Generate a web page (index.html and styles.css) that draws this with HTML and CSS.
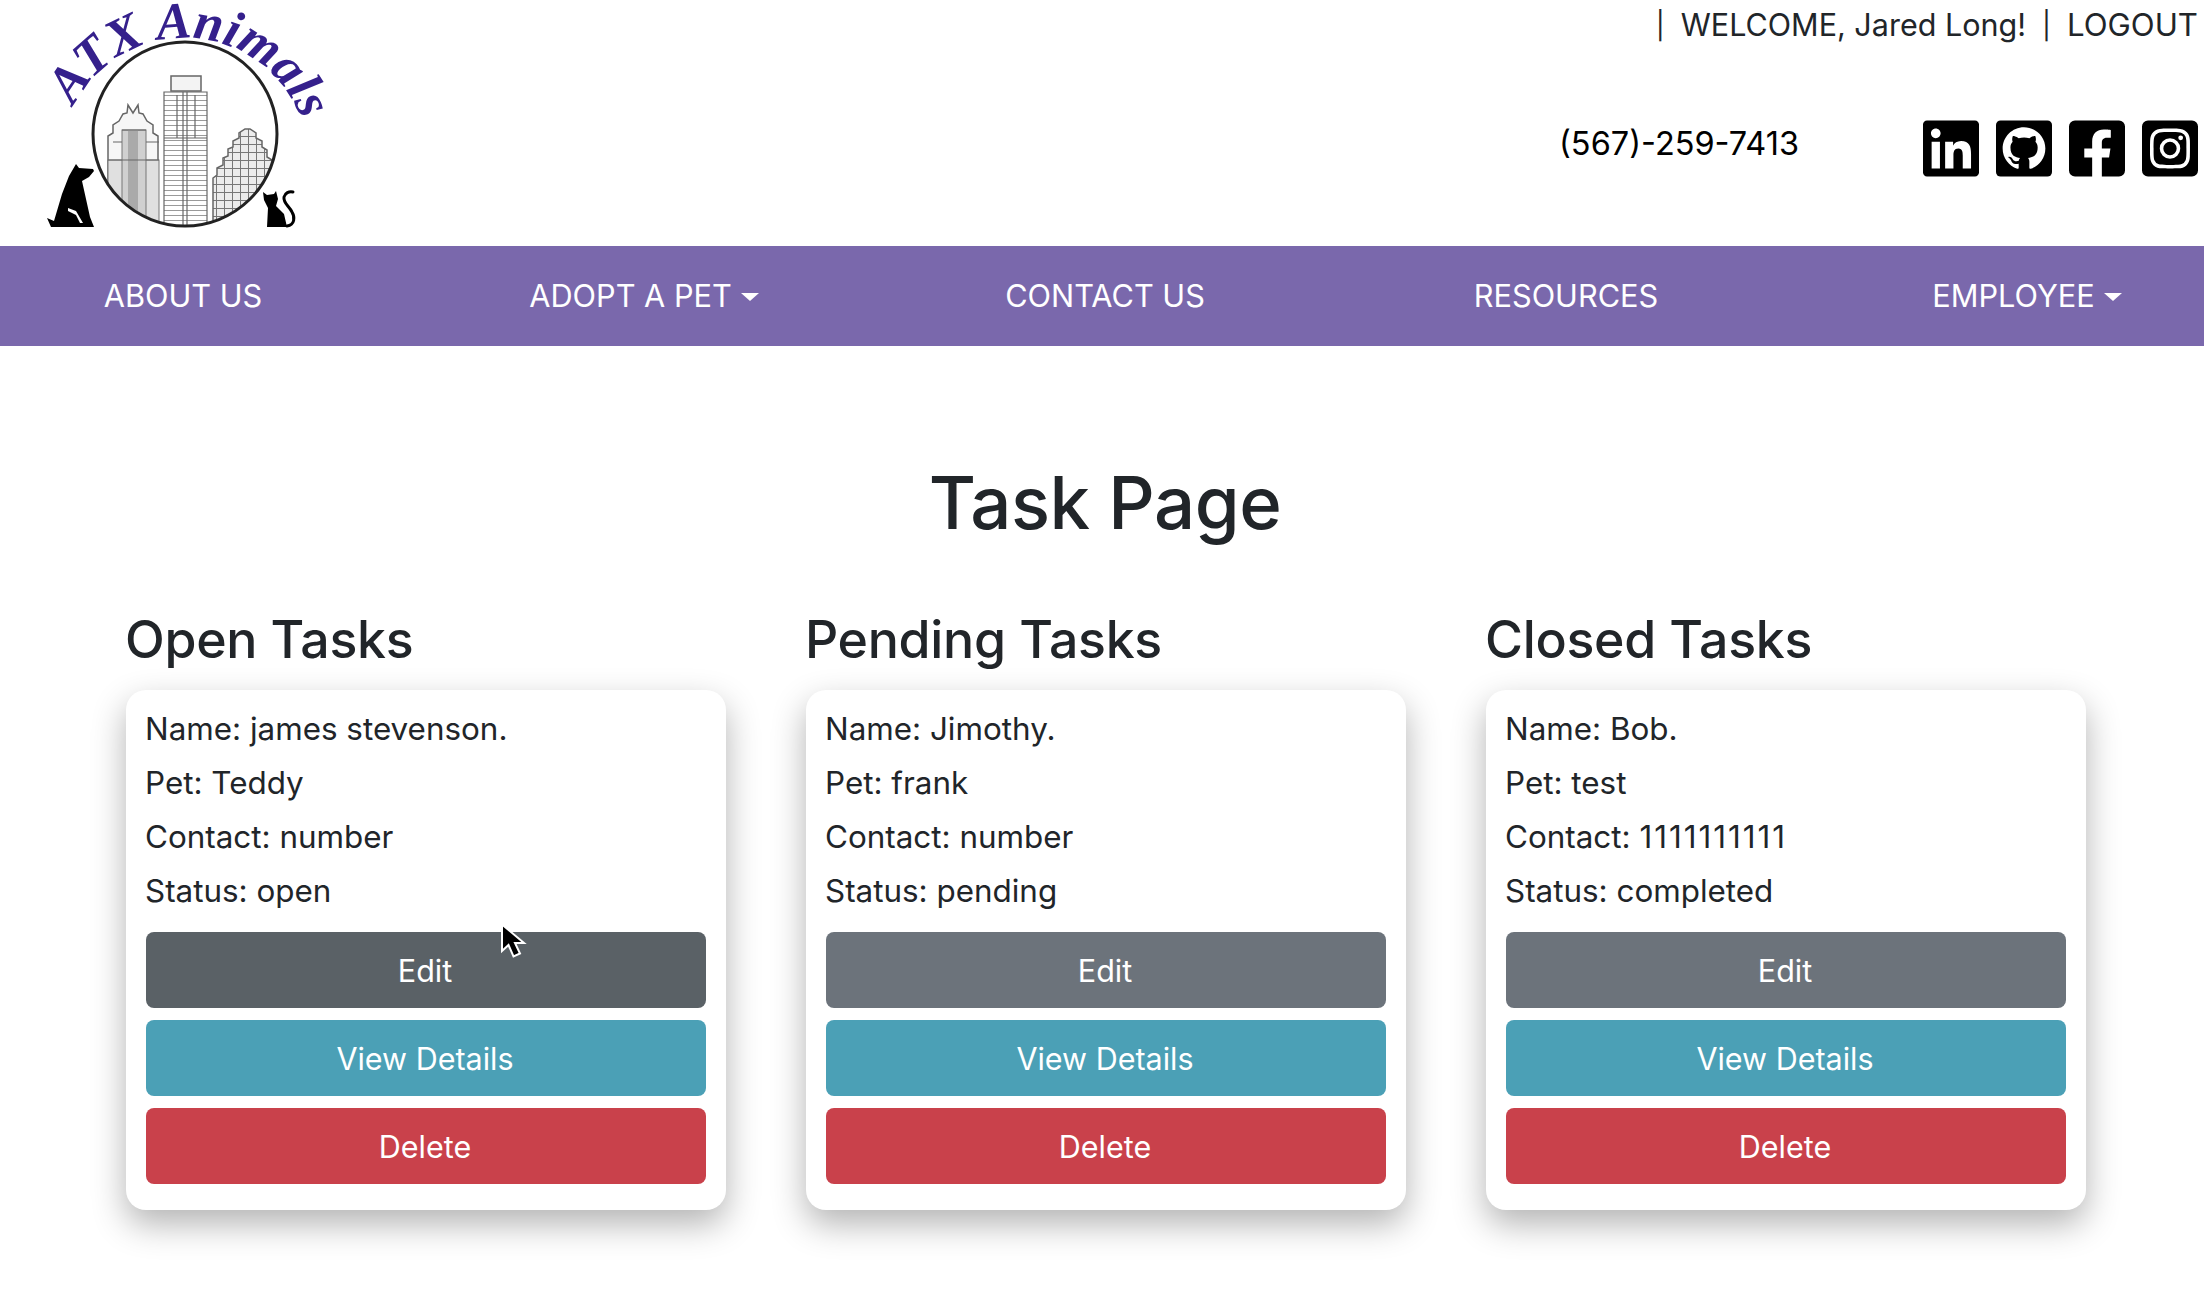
FILE: index.html
```html
<!DOCTYPE html>
<html lang="en">
<head>
<meta charset="utf-8">
<title>Task Page</title>
<link rel="stylesheet" href="styles.css">
</head>
<body>
<header class="top">
  <a class="logo" href="#" aria-label="ATX Animals">
    <svg width="340" height="246" viewBox="0 0 340 246">
      <defs>
        <clipPath id="disc"><circle cx="185" cy="134" r="91"/></clipPath>
        <pattern id="hlines" width="6" height="5" patternUnits="userSpaceOnUse">
          <path d="M0 .5H6" stroke="#9a9a9a" stroke-width="1"/>
        </pattern>
        <pattern id="grid" width="8" height="8" patternUnits="userSpaceOnUse">
          <rect width="8" height="8" fill="#ececec"/>
          <path d="M0 .5H8M.5 0V8" stroke="#777" stroke-width="1"/>
        </pattern>
        <path id="arc" d="M74 106A124 124 0 0 1 304 128"/>
      </defs>
      <text class="logo-text"><textPath href="#arc" startOffset="0">ATX Animals</textPath></text>
      <g clip-path="url(#disc)">
        <path class="b-light" d="M108 228V136l5-3v-8l6-4 4-7 4-1 1-8 5 8 5-8 1 8 4 1 4 7 6 4v8l5 3v92z"/>
        <rect class="b-side" x="108" y="160" width="51" height="70"/>
        <rect class="b-mid" x="122" y="130" width="24" height="100"/>
        <rect class="b-dark" x="128" y="130" width="10" height="100"/>
        <path class="b-line" d="M108 160H159M122 130H146M113 142H122M146 142H159"/>
        <rect class="b-cap" x="171" y="76" width="30" height="15"/>
        <rect class="b-fill" x="164" y="92" width="43" height="136"/>
        <path class="b-line" d="M164 92H207V228H164ZM183 92V228M187 92V228M164 138H207M177 95V138M195 95V138"/>
        <path class="b-grid" d="M213 228V178l4-3v-7l6-3v-7l5-2v-7l5-2v-6l6-3v-5l6-4 5 0 6 4v5l6 3v6l5 3v7l5 3v7l5 4v50z"/>
      </g>
      <circle class="disc" cx="185" cy="134" r="92"/>
      <path class="sil" d="M76 164l3 4 14 1 1 2-5 6-7 4 8 36 4 10H51l-4-9 7 3 8-27 7-18z"/>
      <path class="sil-cut" d="M68 208l8 3 7 12-3 0-4-8-8-4z"/>
      <path class="sil" d="M263 192l4 3 7-1 2-3 2 8-2 7 8 8 3 13H267l1-19-4-8z"/>
      <path class="tail" d="M287 226c8-1 8-9 5-14-3-6-9-9-8-15 1-4 5-6 9-5"/>
    </svg>
  </a>
  <div class="account">
    <nav class="user-links">
      <span class="sep">|</span><a href="#">WELCOME, Jared Long!</a><span class="sep">|</span><a href="#" class="logout">LOGOUT</a>
    </nav>
    <div class="contact-row">
      <span class="phone">(567)-259-7413</span>
      <div class="socials">
        <a href="#" aria-label="LinkedIn"><svg class="icon" viewBox="0 32 448 448"><path d="M416 32H31.9C14.3 32 0 46.5 0 64.3v383.4C0 465.5 14.3 480 31.9 480H416c17.6 0 32-14.5 32-32.3V64.3c0-17.8-14.4-32.3-32-32.3zM135.4 416H69V202.2h66.5V416zm-33.2-243c-21.3 0-38.5-17.3-38.5-38.5S80.9 96 102.2 96c21.2 0 38.5 17.3 38.5 38.5 0 21.3-17.2 38.5-38.5 38.5zm282.1 243h-66.4V312c0-24.8-.5-56.7-34.5-56.7-34.6 0-39.9 27-39.9 54.9V416h-66.4V202.2h63.7v29.2h.9c8.9-16.8 30.6-34.5 62.9-34.5 67.2 0 79.7 44.3 79.7 101.9V416z"/></svg></a>
        <a href="#" aria-label="GitHub"><svg class="icon" viewBox="0 0 16 16"><rect width="16" height="16" rx="1.3"/><g transform="translate(1.9 1.9) scale(.7625)"><path class="knock" d="M8 0C3.58 0 0 3.58 0 8c0 3.54 2.29 6.53 5.47 7.59.4.07.55-.17.55-.38 0-.19-.01-.82-.01-1.49-2.01.37-2.53-.49-2.69-.94-.09-.23-.48-.94-.82-1.13-.28-.15-.68-.52-.01-.53.63-.01 1.08.58 1.23.82.72 1.21 1.87.87 2.33.66.07-.52.28-.87.51-1.07-1.78-.2-3.64-.89-3.64-3.95 0-.87.31-1.59.82-2.15-.08-.2-.36-1.02.08-2.12 0 0 .67-.21 2.2.82.64-.18 1.32-.27 2-.27.68 0 1.36.09 2 .27 1.53-1.04 2.2-.82 2.2-.82.44 1.1.16 1.92.08 2.12.51.56.82 1.27.82 2.15 0 3.07-1.87 3.75-3.65 3.95.29.25.54.73.54 1.48 0 1.07-.01 1.93-.01 2.2 0 .21.15.46.55.38A8.013 8.013 0 0016 8c0-4.42-3.58-8-8-8z"/></g></svg></a>
        <a href="#" aria-label="Facebook"><svg class="icon" viewBox="0 32 448 448"><path d="M400 32H48A48 48 0 0 0 0 80v352a48 48 0 0 0 48 48h137.25V327.69h-63V256h63v-54.64c0-62.15 37-96.48 93.67-96.48 27.14 0 55.52 4.84 55.52 4.84v61h-31.27c-30.81 0-40.42 19.12-40.42 38.73V256h68.78l-11 71.69h-57.78V480H400a48 48 0 0 0 48-48V80a48 48 0 0 0-48-48z"/></svg></a>
        <a href="#" aria-label="Instagram"><svg class="icon" viewBox="0 32 448 448"><path d="M224,202.66A53.34,53.34,0,1,0,277.36,256,53.38,53.38,0,0,0,224,202.66Zm124.71-41a54,54,0,0,0-30.41-30.41c-21-8.29-71-6.43-94.3-6.43s-73.25-1.93-94.31,6.43a54,54,0,0,0-30.41,30.41c-8.28,21-6.43,71.05-6.43,94.33S91,329.26,99.32,350.33a54,54,0,0,0,30.41,30.41c21,8.29,71,6.43,94.31,6.43s73.24,1.93,94.3-6.43a54,54,0,0,0,30.41-30.41c8.35-21,6.43-71.05,6.43-94.33S357.1,182.74,348.75,161.67ZM224,338a82,82,0,1,1,82-82A81.9,81.9,0,0,1,224,338Zm85.38-148.3a19.14,19.14,0,1,1,19.13-19.14A19.1,19.1,0,0,1,309.42,189.74ZM400,32H48A48,48,0,0,0,0,80V432a48,48,0,0,0,48,48H400a48,48,0,0,0,48-48V80A48,48,0,0,0,400,32ZM382.88,322c-1.29,25.63-7.14,48.34-25.85,67s-41.4,24.63-67,25.85c-26.41,1.49-105.59,1.49-132,0-25.63-1.29-48.26-7.15-67-25.85s-24.63-41.42-25.85-67c-1.49-26.42-1.49-105.61,0-132,1.29-25.63,7.07-48.34,25.85-67s41.47-24.56,67-25.78c26.41-1.49,105.59-1.49,132,0,25.63,1.29,48.33,7.15,67,25.85s24.63,41.42,25.85,67.05C384.37,216.44,384.37,295.56,382.88,322Z"/></svg></a>
      </div>
    </div>
  </div>
</header>

<nav class="mainnav">
  <a href="#">ABOUT US</a>
  <a href="#" class="has-caret">ADOPT A PET</a>
  <a href="#">CONTACT US</a>
  <a href="#">RESOURCES</a>
  <a href="#" class="has-caret">EMPLOYEE</a>
</nav>

<main class="page">
  <h1>Task Page</h1>
  <div class="columns">
    <section class="column">
      <h2>Open Tasks</h2>
      <article class="card">
        <p>Name: james stevenson.</p>
        <p>Pet: Teddy</p>
        <p>Contact: number</p>
        <p>Status: open</p>
        <div class="actions">
          <button class="btn btn-edit btn-hover">Edit
            <svg class="cursor" width="28" height="38" viewBox="0 0 28 38"><path d="M2 1.500V28L8.500 22L13.500 33.500L20 30.500L15 20H24Z"/></svg>
          </button>
          <button class="btn btn-info">View Details</button>
          <button class="btn btn-danger">Delete</button>
        </div>
      </article>
    </section>
    <section class="column">
      <h2>Pending Tasks</h2>
      <article class="card">
        <p>Name: Jimothy.</p>
        <p>Pet: frank</p>
        <p>Contact: number</p>
        <p>Status: pending</p>
        <div class="actions">
          <button class="btn btn-edit">Edit</button>
          <button class="btn btn-info">View Details</button>
          <button class="btn btn-danger">Delete</button>
        </div>
      </article>
    </section>
    <section class="column">
      <h2>Closed Tasks</h2>
      <article class="card">
        <p>Name: Bob.</p>
        <p>Pet: test</p>
        <p>Contact: <span class="digits">1111111111</span></p>
        <p>Status: completed</p>
        <div class="actions">
          <button class="btn btn-edit">Edit</button>
          <button class="btn btn-info">View Details</button>
          <button class="btn btn-danger">Delete</button>
        </div>
      </article>
    </section>
  </div>
</main>
</body>
</html>
```

FILE: styles.css
```css
* { box-sizing: border-box; }
html, body { margin: 0; height: 100%; }
body {
  font-family: Inter, "Liberation Sans", sans-serif;
  font-size: 22.4px;
  line-height: 1.5;
  color: #212529;
  background: #fff;
  overflow: hidden;
}
a { color: inherit; text-decoration: none; }

.top { display: flex; justify-content: space-between; height: 246px; }
.logo, .logo svg { display: block; }
.logo-text {
  font-family: "Liberation Serif", serif;
  font-style: italic;
  font-weight: 700;
  font-size: 52px;
  fill: #35208c;
}
.disc { fill: none; stroke: #222; stroke-width: 3; }
.b-light { fill: #f6f6f6; stroke: #666; stroke-width: 1.5; }
.b-side { fill: #e0e0e0; stroke: #777; stroke-width: 1; }
.b-mid { fill: #d0d0d0; stroke: #777; stroke-width: 1; }
.b-dark { fill: #aaa; }
.b-line { fill: none; stroke: #666; stroke-width: 1.2; }
.b-cap { fill: #f3f3f3; stroke: #666; stroke-width: 1.5; }
.b-fill { fill: url(#hlines); }
.b-grid { fill: url(#grid); stroke: #666; stroke-width: 1.5; }
.sil { fill: #000; }
.sil-cut { fill: #fff; }
.tail { fill: none; stroke: #000; stroke-width: 3; stroke-linecap: round; }

.account { display: flex; flex-direction: column; align-items: flex-end; padding-right: 6px; }
.user-links { display: flex; gap: 16px; height: 50px; padding-top: 1px; align-items: center; font-size: 30.500px; line-height: 1; }
.user-links .sep { font-size: 27px; }
.user-links .logout { font-size: 31.200px; }
.user-links a, .user-links .sep { white-space: nowrap; }
.contact-row { display: flex; align-items: center; margin-top: 70px; }
.phone { color: #000; font-size: 32.500px; line-height: 1; margin-right: 124px; margin-top: -9px; white-space: nowrap; }
.socials { display: flex; gap: 17px; }
.socials a { display: block; height: 57px; }
.icon { display: block; width: 56px; height: 57px; fill: #000; }
.knock { fill: #fff; }

.mainnav {
  display: grid;
  grid-template-columns: repeat(5, 461px);
  justify-content: center;
  height: 100px;
  padding: 1px 0 0 6px;
  background: #7a68ac;
  overflow: hidden;
}
.mainnav a {
  display: flex;
  align-items: center;
  justify-content: center;
  gap: 9px;
  color: #fff;
  font-size: 30.700px;
}
.has-caret::after {
  content: "";
  border-top: 8.500px solid #fff;
  border-left: 9px solid transparent;
  border-right: 9px solid transparent;
}

.page { width: 1968px; margin: 0 auto; padding-left: 8px; }
h1 {
  margin: 110px 0 0;
  padding-right: 2px;
  text-align: center;
  font-size: 72.500px;
  font-weight: 500;
  line-height: 94px;
  letter-spacing: -.5px;
}
.columns { display: grid; grid-template-columns: repeat(3, 600px); column-gap: 80px; margin-top: 58px; }
h2 {
  margin: 0 0 20px -1px;
  font-size: 51.800px;
  font-weight: 500;
  line-height: 62px;
  letter-spacing: -.3px;
}
.card {
  padding: 20px 20px 26px;
  background: #fff;
  border-radius: 20px;
  box-shadow: 0 14px 34px rgba(0, 0, 0, .3);
}
.card p { margin: 0 0 16px -1px; font-size: 31.400px; line-height: 38px; }
.card p:last-of-type { margin-bottom: 0; }
.digits { letter-spacing: 2px; }
.actions { display: flex; flex-direction: column; gap: 12px; margin-top: 22px; }
.btn {
  position: relative;
  display: block;
  width: 100%;
  height: 76px;
  padding: 2px 2px 0 0;
  border: 0;
  border-radius: 8px;
  color: #fff;
  font: inherit;
  font-size: 30.500px;
}
.btn-edit { background: #6c737b; }
.btn-hover { background: #5a6166; }
.btn-info { background: #4ba0b6; }
.btn-danger { background: #c9414b; }
.cursor { position: absolute; left: 354px; top: -9px; }
.cursor path { fill: #000; stroke: #fff; stroke-width: 2; }
```
